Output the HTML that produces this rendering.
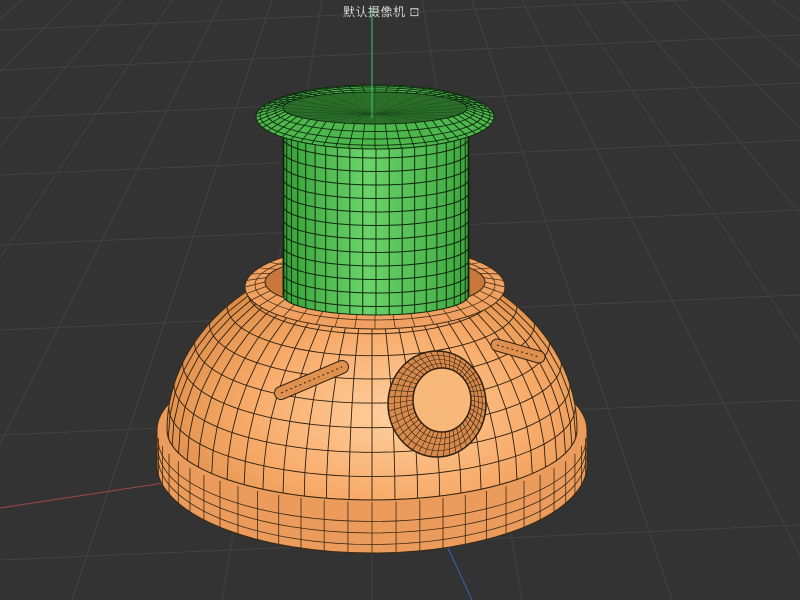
<!DOCTYPE html>
<html><head><meta charset="utf-8"><style>
html,body{margin:0;padding:0;background:#333333;overflow:hidden;width:800px;height:600px}
svg{display:block}
.lbl{position:absolute;left:343px;top:3px;font:12px "Liberation Sans","Noto Sans CJK SC",sans-serif;color:#dcdcdc;letter-spacing:0.5px}
</style></head><body>
<div class="lbl">默认摄像机 <span style="font-size:12px">⊡</span></div>
<svg id="s" width="800" height="600" viewBox="0 0 800 600" xmlns="http://www.w3.org/2000/svg" style="position:absolute;left:0;top:0">
<defs>
<radialGradient id="og" cx="0.55" cy="0.65" r="0.6">
<stop offset="0" stop-color="#ffcf9e"/><stop offset="0.6" stop-color="#f7aa68"/><stop offset="1" stop-color="#dc8c48"/></radialGradient>
<linearGradient id="gg" x1="0" x2="1">
<stop offset="0" stop-color="#36a036"/><stop offset="0.45" stop-color="#6ad46a"/><stop offset="1" stop-color="#3ea63e"/></linearGradient>
<clipPath id="domeC"><path id="domeP" d=""/></clipPath>
<clipPath id="cylC"><path d="M283,125 L283,295 A93,20 0 0 0 469,295 L469,125 Z"/></clipPath>
</defs>
<g id="grid" stroke="#424242" stroke-width="1" fill="none"></g>
<line x1="0" y1="508" x2="170" y2="482" stroke="#a04848" stroke-width="1"/>
<line x1="448" y1="548" x2="472" y2="600" stroke="#4060b0" stroke-width="1"/>
<g id="dome"></g>
<line x1="372" y1="8" x2="372" y2="118" stroke="#40c070" stroke-width="1"/>
</svg>
<script>
var NS="http://www.w3.org/2000/svg";
function el(p,t,a){var e=document.createElementNS(NS,t);for(var k in a)e.setAttribute(k,a[k]);p.appendChild(e);return e;}
var g=document.getElementById('grid');
var vx=372,vy=-300;
for(var i=-9;i<=9;i++){var bx=372+i*150;el(g,'line',{x1:vx+(bx-vx)*0.3,y1:vy+(600-vy)*0.3,x2:vx+(bx-vx)*1.2,y2:vy+(600-vy)*1.2});}
[30,70,118,175,245,330,435,560].forEach(function(y){el(g,'line',{x1:0,y1:y,x2:800,y2:y-35});});
var d=document.getElementById('dome');
var cx=372, L="#3a2812";
function P(th,ph){return [cx+205*Math.sin(th)*Math.sin(ph),430-175*Math.cos(th)+70*Math.sin(th)*Math.cos(ph)];}
// flange
el(d,'path',{d:"M157,430 L157,465 A215,88 0 0 0 587,465 L587,430 A215,80 0 0 0 157,430 Z",fill:"#eb9c5c",stroke:L,"stroke-width":1});
for(var k=1;k<4;k++)el(d,'path',{d:"M158,"+(430+k*9)+" A214,"+(80+k*2.5)+" 0 0 0 586,"+(430+k*9),fill:"none",stroke:L,"stroke-width":0.8});
for(var k=-13;k<=13;k++){var a=k/14*Math.PI/2;var x=cx+215*Math.sin(a),yb=465+88*Math.cos(a),yt=430+72*Math.cos(a);el(d,'line',{x1:x,y1:yt,x2:x,y2:yb,stroke:L,"stroke-width":0.8});}
// dome body
var pts=[];for(var t=-90;t<=90;t+=3){var th=Math.abs(t)*Math.PI/180,ph=t<0?-Math.PI/2:Math.PI/2;pts.push(P(th,ph));}
for(var t=-90;t<=90;t+=3){var ph=t*Math.PI/180;pts.push(P(Math.PI/2,-ph));}
var dp="M"+pts.map(function(p){return p[0].toFixed(1)+","+p[1].toFixed(1)}).join(" L")+"Z";
document.getElementById('domeP').setAttribute('d',dp);
el(d,'path',{d:dp,fill:"url(#og)",stroke:L,"stroke-width":1});
var wg=el(d,'g',{"clip-path":"url(#domeC)",stroke:"#2e2010","stroke-width":0.9,fill:"none"});
for(var j=1;j<=12;j++){var th=j*Math.PI/24;var q=[];for(var t=-90;t<=90;t+=4)q.push(P(th,t*Math.PI/180));el(wg,'polyline',{points:q.map(function(p){return p.join(',')}).join(' ')});}
for(var m=-13;m<=13;m++){var ph=m*Math.PI/28;var q=[];for(var j=0;j<=12;j++)q.push(P(j*Math.PI/24,ph));el(wg,'polyline',{points:q.map(function(p){return p.join(',')}).join(' ')});}
// top ring of dome
el(d,'ellipse',{cx:375,cy:287,rx:130,ry:42,fill:"#f0a060",stroke:L});
el(d,'ellipse',{cx:375,cy:282,rx:110,ry:28,fill:"#c8783a",stroke:L});
for(var k=0;k<40;k++){var a=k/40*2*Math.PI;el(d,'line',{x1:375+110*Math.cos(a),y1:282+28*Math.sin(a),x2:375+130*Math.cos(a),y2:287+42*Math.sin(a),stroke:L,"stroke-width":0.7});}
el(d,'ellipse',{cx:375,cy:285,rx:120,ry:35,fill:"none",stroke:L,"stroke-width":0.7});
// slots and torus
function slot(x1,y1,x2,y2,w){el(d,'line',{x1:x1,y1:y1,x2:x2,y2:y2,stroke:"#2e2010","stroke-width":w+2,"stroke-linecap":"round"});el(d,'line',{x1:x1,y1:y1,x2:x2,y2:y2,stroke:"#e0904e","stroke-width":w,"stroke-linecap":"round"});el(d,'line',{x1:x1,y1:y1,x2:x2,y2:y2,stroke:"#2e2010","stroke-width":1,"stroke-dasharray":"2 3"});}
slot(281,393,342,367,12);slot(497,345,539,357,11);
el(d,'ellipse',{cx:437,cy:404,rx:49,ry:53,fill:"#d88a4c",stroke:"#2e2010","stroke-width":1.5});
el(d,'ellipse',{cx:442,cy:400,rx:29,ry:32,fill:"#f8b87a",stroke:"#2e2010","stroke-width":1.5});
for(var k=0;k<48;k++){var a=k/48*2*Math.PI;el(d,'line',{x1:442+29*Math.cos(a),y1:400+32*Math.sin(a),x2:437+49*Math.cos(a),y2:404+53*Math.sin(a),stroke:"#2e2010","stroke-width":0.6});}
[0.25,0.5,0.75].forEach(function(f){el(d,'ellipse',{cx:442-5*f,cy:400+4*f,rx:29+20*f,ry:32+21*f,fill:"none",stroke:"#2e2010","stroke-width":0.6});});
// cylinder
el(d,'path',{d:"M283,125 L283,295 A93,20 0 0 0 469,295 L469,125 Z",fill:"url(#gg)",stroke:"#0f2a0f"});
var cg=el(d,'g',{"clip-path":"url(#cylC)",stroke:"#102810","stroke-width":1,fill:"none"});
for(var k=-10;k<=10;k++){var x=376+93*Math.sin(k/11*Math.PI/2);el(cg,'line',{x1:x,y1:120,x2:x,y2:320});}
for(var y=138;y<=300;y+=13.5)el(cg,'path',{d:"M283,"+y+" A93,20 0 0 0 469,"+y});
// rim torus
el(d,'ellipse',{cx:375,cy:117,rx:119,ry:32,fill:"#4cb84c",stroke:"#0f2a0f"});
el(d,'ellipse',{cx:375,cy:108,rx:92,ry:16,fill:"#2a6e2a",stroke:"#0f2a0f"});
for(var k=0;k<56;k++){var a=k/56*2*Math.PI;el(d,'line',{x1:375+92*Math.cos(a),y1:108+16*Math.sin(a),x2:375+119*Math.cos(a),y2:117+32*Math.sin(a),stroke:"#0f2a0f","stroke-width":0.9});}
[0.3,0.6,0.85].forEach(function(f){el(d,'ellipse',{cx:375,cy:108+9*f,rx:92+27*f,ry:16+16*f,fill:"none",stroke:"#0f2a0f","stroke-width":0.9});});
for(var k=0;k<24;k++){var a=k/24*2*Math.PI;el(d,'line',{x1:375,y1:114,x2:375+90*Math.cos(a),y2:108+15*Math.sin(a),stroke:"#1a4a1a","stroke-width":0.5});}
</script>
</body></html>
